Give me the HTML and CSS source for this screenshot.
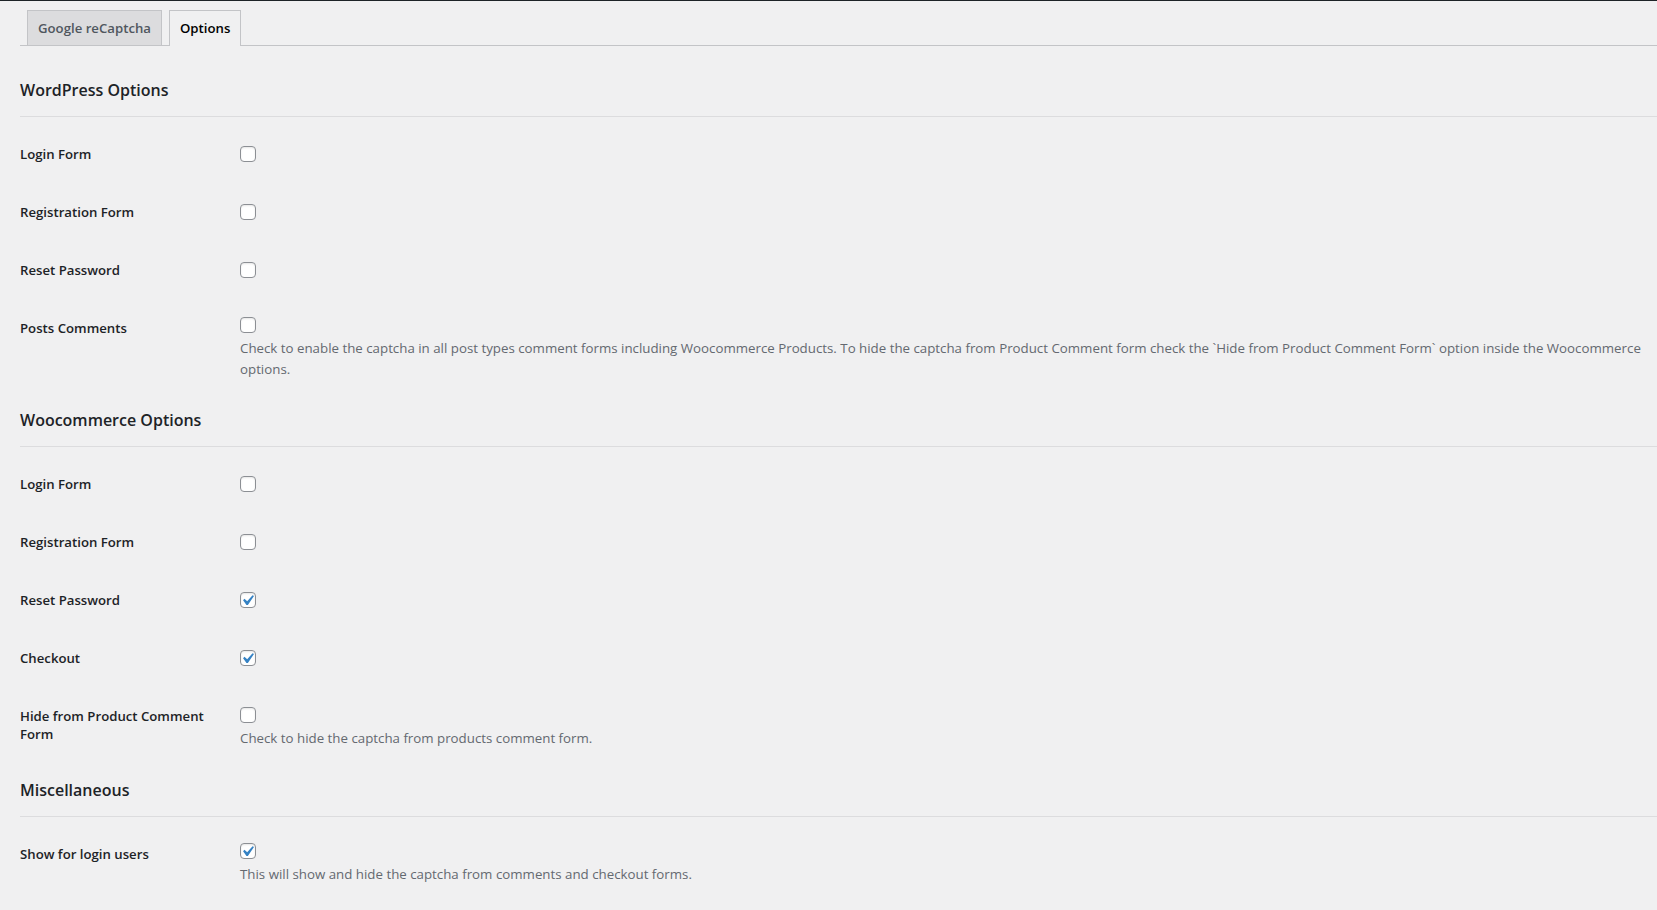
FILE: index.html
```html
<!DOCTYPE html>
<html lang="en">
<head>
<meta charset="utf-8">
<title>Options</title>
<link rel="stylesheet" href="styles.css">
</head>
<body>
<div class="wrap">
  <nav class="nav-tabs">
    <a class="nav-tab" href="#">Google reCaptcha</a>
    <a class="nav-tab nav-tab-active" href="#">Options</a>
  </nav>

  <form class="options-form">
    <h2 class="section-title">WordPress Options</h2>
    <div class="form-table">
      <div class="row">
        <div class="row-label">Login Form</div>
        <div class="row-field"><input type="checkbox" class="cb"></div>
      </div>
      <div class="row">
        <div class="row-label">Registration Form</div>
        <div class="row-field"><input type="checkbox" class="cb"></div>
      </div>
      <div class="row">
        <div class="row-label">Reset Password</div>
        <div class="row-field"><input type="checkbox" class="cb"></div>
      </div>
      <div class="row">
        <div class="row-label">Posts Comments</div>
        <div class="row-field has-desc">
          <input type="checkbox" class="cb">
          <p class="description">Check to enable the captcha in all post types comment forms including Woocommerce Products. To hide the captcha from Product Comment form check the `Hide from Product Comment Form` option inside the Woocommerce options.</p>
        </div>
      </div>
    </div>

    <h2 class="section-title">Woocommerce Options</h2>
    <div class="form-table">
      <div class="row">
        <div class="row-label">Login Form</div>
        <div class="row-field"><input type="checkbox" class="cb"></div>
      </div>
      <div class="row">
        <div class="row-label">Registration Form</div>
        <div class="row-field"><input type="checkbox" class="cb"></div>
      </div>
      <div class="row">
        <div class="row-label">Reset Password</div>
        <div class="row-field"><input type="checkbox" class="cb" checked></div>
      </div>
      <div class="row">
        <div class="row-label">Checkout</div>
        <div class="row-field"><input type="checkbox" class="cb" checked></div>
      </div>
      <div class="row">
        <div class="row-label">Hide from Product Comment Form</div>
        <div class="row-field has-desc tall">
          <input type="checkbox" class="cb">
          <p class="description">Check to hide the captcha from products comment form.</p>
        </div>
      </div>
    </div>

    <h2 class="section-title">Miscellaneous</h2>
    <div class="form-table">
      <div class="row">
        <div class="row-label">Show for login users</div>
        <div class="row-field has-desc">
          <input type="checkbox" class="cb" checked>
          <p class="description">This will show and hide the captcha from comments and checkout forms.</p>
        </div>
      </div>
    </div>
  </form>
</div>
</body>
</html>
```

FILE: styles.css
```css
* {
  box-sizing: border-box;
}

html, body {
  margin: 0;
  padding: 0;
}

body {
  background: #f0f0f1;
  border-top: 1px solid #1d2327;
  color: #3c434a;
  font-family: "Open Sans", "Noto Sans", "Liberation Sans", sans-serif;
  font-size: 13px;
  line-height: 1.4;
  overflow: hidden;
}

.wrap {
  margin: 0 0 0 20px;
}

.nav-tabs {
  display: flex;
  padding-top: 9px;
  border-bottom: 1px solid #c3c4c7;
}

.nav-tab {
  display: block;
  margin-left: 7px;
  padding: 5px 10px;
  border: 1px solid #c3c4c7;
  border-bottom: none;
  background: #dcdcde;
  color: #50575e;
  font-size: 13.2px;
  font-weight: 600;
  line-height: 24px;
  text-decoration: none;
  white-space: nowrap;
}

.nav-tab-active {
  background: #f0f0f1;
  color: #000;
  margin-bottom: -1px;
  padding-bottom: 6px;
}

.options-form {
  margin: 0;
  padding-top: 17px;
}

.section-title {
  margin: 16px 0 0;
  padding-bottom: 14px;
  border-bottom: 1px solid #dcdcde;
  color: #1d2327;
  font-size: 16px;
  font-weight: 600;
  line-height: 23px;
}

.form-table {
  margin-top: 8px;
}

.row {
  display: grid;
  grid-template-columns: 210px 1fr;
}

.row-label {
  padding: 20px 10px 20px 0;
  color: #1d2327;
  font-size: 13.2px;
  font-weight: 600;
  line-height: 18px;
}

.row-field {
  padding: 21px 10px 15px;
  font-size: 13.3px;
  line-height: 18px;
}

.row-field.has-desc {
  padding-top: 18px;
  padding-bottom: 13px;
}

.row-field.has-desc.tall {
  padding-top: 20px;
}

.cb {
  -webkit-appearance: none;
  appearance: none;
  display: block;
  width: 16px;
  height: 16px;
  margin: 0;
  border: 1px solid #8c8f94;
  border-radius: 4px;
  background: #fff;
  box-shadow: inset 0 1px 2px rgba(0, 0, 0, 0.1);
}

.cb:checked {
  background: #fff url("data:image/svg+xml;utf8,%3Csvg%20xmlns%3D%27http%3A%2F%2Fwww.w3.org%2F2000%2Fsvg%27%20viewBox%3D%270%200%2020%2020%27%3E%3Cpath%20d%3D%27M14.83%204.89l1.34.94-5.81%208.38H9.02L5.78%209.67l1.34-1.25%202.57%202.4z%27%20fill%3D%27%233582c4%27%2F%3E%3C%2Fsvg%3E") no-repeat -4px -3px / 21px 21px;
}

.description {
  margin: 5px 0 0;
  color: #646970;
  font-size: 13.3px;
  line-height: 21px;
}
```
